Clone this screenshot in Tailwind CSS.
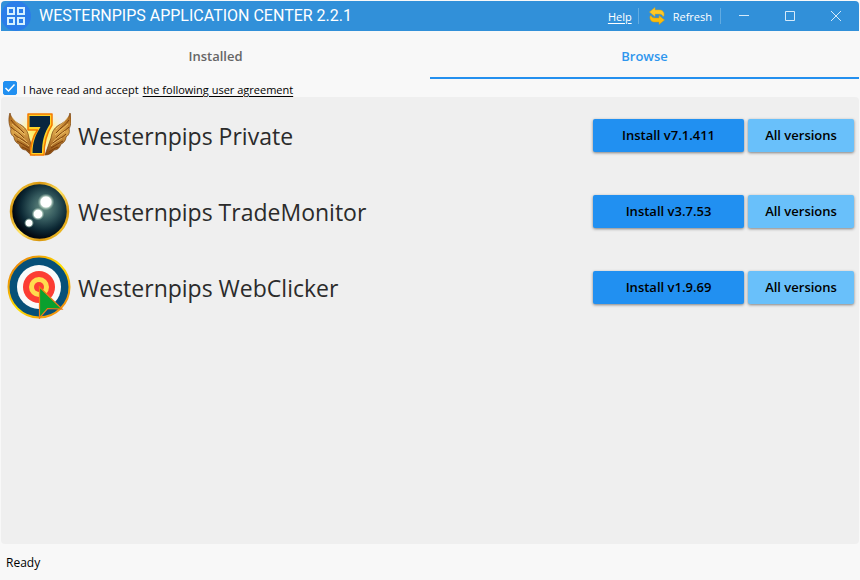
<!DOCTYPE html>
<html lang="en">
<head>
<meta charset="utf-8">
<meta name="viewport" content="width=device-width, initial-scale=1">
<title>Westernpips Application Center</title>
<script src="https://cdn.jsdelivr.net/npm/@tailwindcss/browser@4"></script>
</head>
<body class="flex min-h-screen flex-col bg-[#f8f8f8] p-px pb-0 font-['Open_Sans','Noto_Sans',sans-serif] text-xs text-black">
<header class="flex h-[30px] items-center rounded-t bg-[#3190d9] text-[11px] text-white">
  <svg class="size-[30px] shrink-0" viewBox="0 0 30 30" aria-hidden="true">
    <circle cx="15" cy="15" r="15" fill="#2b7de9"/>
    <g fill="none" stroke="#d5f0ff" stroke-width="2"><path d="M7 7h6v6H7zM17 7h6v6h-6zM7 17h6v6H7zM17 17h6v6h-6z"/></g>
  </svg>
  <h1 class="ml-2 font-['Roboto',sans-serif] text-base leading-6 font-normal whitespace-nowrap">WESTERNPIPS APPLICATION CENTER 2.2.1</h1>
  <div class="ml-auto flex h-full items-center">
    <a href="#" class="mr-1.5 pt-0.5 font-medium underline underline-offset-2">Help</a>
    <span class="h-4 w-px bg-[#62abe1]"></span>
    <button type="button" class="mr-2 ml-2.5 flex items-center gap-2">
      <svg class="h-[18px] w-4" viewBox="0 0 16 18" aria-hidden="true">
        <path d="M.5 5 6 .5v2.500h4c3.500 0 5.500 2 5 5.500l-1 1c-.5-1.500-1.500-2.500-4-2.500H6v2.500z" fill="#ffc928" stroke="#e5a80d" stroke-width=".5"/>
        <path d="M15.500 13 10 17.500V15H6c-3.500 0-5.500-2-5-5.500l1-1c.5 1.500 1.500 2.500 4 2.500h4V8.500z" fill="#fbbd0c" stroke="#d99a10" stroke-width=".5"/>
      </svg>
      <span class="pt-0.5 font-medium">Refresh</span>
    </button>
    <span class="h-4 w-px bg-[#62abe1]"></span>
    <button type="button" aria-label="Minimize" class="flex h-full w-[46px] items-center justify-center"><svg class="size-3" viewBox="0 0 12 12"><path d="M1 5.500h10" stroke="#d5eafa"/></svg></button>
    <button type="button" aria-label="Maximize" class="flex h-full w-[46px] items-center justify-center"><svg class="size-3" viewBox="0 0 12 12"><path d="M1.500 1.500h9v9h-9z" fill="none" stroke="#d5eafa"/></svg></button>
    <button type="button" aria-label="Close" class="flex h-full w-[46px] items-center justify-center"><svg class="size-3" viewBox="0 0 12 12"><path d="m1 1 10 10M11 1 1 11" stroke="#d5eafa"/></svg></button>
  </div>
</header>
<nav class="grid h-12 grid-cols-2 text-[13px] font-semibold">
  <button type="button" class="border-b-2 border-transparent pt-1.5 text-[#666]">Installed</button>
  <button type="button" class="border-b-2 border-[#2490ef] pt-1.5 text-[#2e96ee]">Browse</button>
</nav>
<div class="flex h-[18px] items-center pl-0.5 text-[11px]">
  <span class="relative mr-1.5 flex size-3.5">
    <input id="accept" type="checkbox" checked class="peer size-3.5 appearance-none rounded-xs border border-[#2190f1] checked:bg-[#2190f1]">
    <svg class="pointer-events-none absolute inset-0 hidden size-3.5 peer-checked:block" viewBox="0 0 14 14"><path d="m2.500 7 3 3 6-6.500" fill="none" stroke="#fff" stroke-width="1.500"/></svg>
  </span>
  <label for="accept" class="pt-1 font-medium">I have read and accept</label>
  <a href="#" class="ml-1 pt-1 font-medium underline underline-offset-2">the following user agreement</a>
</div>
<main class="flex-1 rounded bg-[#efefef]">
  <ul class="text-[23px] text-[#2b2b2b]">
    <li class="flex h-[76px] items-center pr-[5px] pl-1.5">
      <svg class="size-16 shrink-0" viewBox="0 0 64 64" aria-hidden="true">
        <defs>
          <linearGradient id="feather" x2="0" y2="1"><stop stop-color="#a15a14"/><stop offset=".45" stop-color="#dba449"/><stop offset="1" stop-color="#87440c"/></linearGradient>
          <radialGradient id="halo"><stop stop-color="#ffea35"/><stop offset=".55" stop-color="#fff3a1"/><stop offset="1" stop-color="#efefef" stop-opacity="0"/></radialGradient>
          <g id="wing">
            <path d="M3 10c1 5 5 9 11 12 5 3 7 7 8 13l6 17c-4 0-7-2-9-5-4 0-6-3-7-6-3-1-5-4-5-7-3-2-4-5-3-8-2-4-3-10-1-16z" fill="url(#feather)" stroke="#76400d" stroke-width=".7"/>
            <path d="M4 17c3 5 8 7 13 13M4 24c4 4 9 6 13 11M7 31c4 4 8 5 13 9M10 38c4 2 7 4 12 7M15 44c3 1 6 3 9 5" fill="none" stroke="#7b3f0a" stroke-width="1"/>
            <path d="M5 14c3 5 7 7 12 12M5 21c4 4 8 6 13 11M8 28c4 4 8 6 12 11M11 35c4 3 7 4 11 8" fill="none" stroke="#f3c770" stroke-width=".8"/>
          </g>
        </defs>
        <ellipse cx="33" cy="29" rx="27" ry="24" fill="url(#halo)"/>
        <use href="#wing"/><use href="#wing" transform="matrix(-1 0 0 1 66 0)"/>
        <path d="M21 11h24v11c-6 9-8 18-8 30H23.500c0-11 2-18 7-25H21z" fill="#ffd326" stroke="#f57900" stroke-width="1.500" stroke-linejoin="round"/>
        <path d="M22.500 13h20.500v8c-6 9-8 18-8 29H25.500c0-11 3-18 8-26h-11z" fill="#08263f"/>
      </svg>
      <h2 class="ml-[7px] flex-1 pt-0.5">Westernpips Private</h2>
      <div class="flex gap-1 text-[13px] font-semibold text-black">
        <button type="button" class="h-[33px] w-[151px] rounded-xs bg-[#2190f1] pt-0.5 shadow-[0_1px_3px_#0007]">Install v7.1.411</button>
        <button type="button" class="h-[33px] w-[106px] rounded-xs bg-[#69c0fa] pt-0.5 shadow-[0_1px_3px_#0007]">All versions</button>
      </div>
    </li>
    <li class="flex h-[76px] items-center pr-[5px] pl-1.5">
      <svg class="size-16 shrink-0" viewBox="0 0 64 64" aria-hidden="true">
        <defs>
          <linearGradient id="gold" x2="1" y2="1"><stop stop-color="#ffdf53"/><stop offset=".25" stop-color="#d8960f"/><stop offset=".5" stop-color="#ffe363"/><stop offset=".75" stop-color="#d8960f"/><stop offset="1" stop-color="#ffdd3d"/></linearGradient>
          <radialGradient id="space" cx=".58" cy=".42" r=".55"><stop stop-color="#6a9085"/><stop offset=".42" stop-color="#34595d"/><stop offset=".75" stop-color="#0c2834"/><stop offset="1" stop-color="#020810"/></radialGradient>
          <radialGradient id="glow"><stop offset=".6" stop-color="#fff"/><stop offset=".75" stop-color="#c7e0cf" stop-opacity=".6"/><stop offset="1" stop-color="#91b7a7" stop-opacity="0"/></radialGradient>
        </defs>
        <circle cx="32.500" cy="32.500" r="28.500" fill="url(#space)" stroke="url(#gold)" stroke-width="2.500"/>
        <circle cx="39" cy="23" r="8.500" fill="url(#glow)"/><circle cx="31" cy="35" r="6.500" fill="url(#glow)"/><circle cx="22" cy="44" r="5" fill="url(#glow)"/>
      </svg>
      <h2 class="ml-[7px] flex-1 pt-0.5">Westernpips TradeMonitor</h2>
      <div class="flex gap-1 text-[13px] font-semibold text-black">
        <button type="button" class="h-[33px] w-[151px] rounded-xs bg-[#2190f1] pt-0.5 shadow-[0_1px_3px_#0007]">Install v3.7.53</button>
        <button type="button" class="h-[33px] w-[106px] rounded-xs bg-[#69c0fa] pt-0.5 shadow-[0_1px_3px_#0007]">All versions</button>
      </div>
    </li>
    <li class="flex h-[76px] items-center pr-[5px] pl-1.5">
      <svg class="size-16 shrink-0" viewBox="0 0 64 64" aria-hidden="true">
        <defs><linearGradient id="rim" y1="0" x2="1" y2="1"><stop stop-color="#e46c0a"/><stop offset=".5" stop-color="#ffe000"/><stop offset="1" stop-color="#ed7411"/></linearGradient></defs>
        <circle cx="32" cy="32" r="30.500" fill="#075078" stroke="url(#rim)" stroke-width="2"/>
        <circle cx="32" cy="32" r="22" fill="#fafafa"/><circle cx="32" cy="32" r="16" fill="#fc3d34"/><circle cx="32" cy="32" r="10" fill="#ffdc4e"/><circle cx="32" cy="32" r="5" fill="#fc3d34"/>
        <path d="M32.500 32v31l8-9.500 14.500.5z" fill="#0aa02e" stroke="#ee7d14" stroke-width="1.200"/>
      </svg>
      <h2 class="ml-[7px] flex-1 pt-0.5">Westernpips WebClicker</h2>
      <div class="flex gap-1 text-[13px] font-semibold text-black">
        <button type="button" class="h-[33px] w-[151px] rounded-xs bg-[#2190f1] pt-0.5 shadow-[0_1px_3px_#0007]">Install v1.9.69</button>
        <button type="button" class="h-[33px] w-[106px] rounded-xs bg-[#69c0fa] pt-0.5 shadow-[0_1px_3px_#0007]">All versions</button>
      </div>
    </li>
  </ul>
</main>
<footer class="flex h-9 items-center pt-0.5 pl-[5px]">Ready</footer>
</body>
</html>
